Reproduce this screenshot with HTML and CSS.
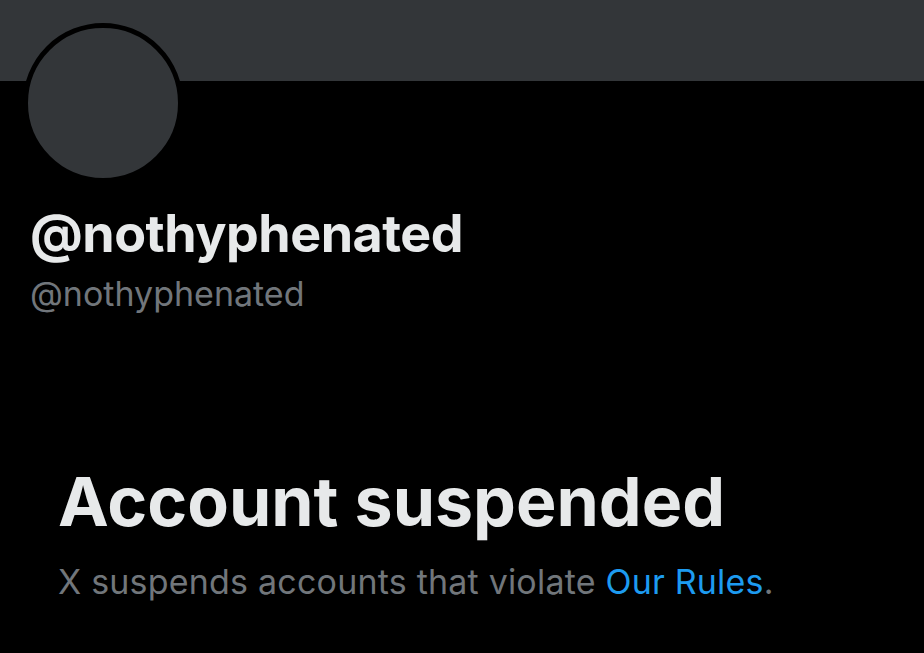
FILE: index.html
```html
<!DOCTYPE html>
<html lang="en">
<head>
  <meta charset="UTF-8">
  <meta name="viewport" content="width=device-width, initial-scale=1.0">
  <title>@nothyphenated / X</title>
  <link rel="stylesheet" href="styles.css">
</head>
<body>
  <div class="banner"></div>

  <div class="profile">
    <div class="avatar"></div>
    <h1 class="display-name">@nothyphenated</h1>
    <div class="handle">@nothyphenated</div>
  </div>

  <div class="suspended">
    <h2>Account suspended</h2>
    <p>X suspends accounts that violate <a href="#">Our Rules</a>.</p>
  </div>
</body>
</html>
```

FILE: styles.css
```css
body {
  margin: 0;
  background: #000000;
  font-family: 'Inter', 'Liberation Sans', sans-serif;
  color: #e7e9ea;
  overflow: hidden;
}

.banner {
  height: 81px;
  background: #333639;
}

.profile {
  padding: 0 0 0 23px;
}

.avatar {
  width: 150px;
  height: 150px;
  margin-top: -58px;
  background: #333639;
  border: 5px solid #000000;
  border-radius: 50%;
}

.display-name {
  margin: 22px 0 0 7px;
  font-size: 52px;
  font-weight: 700;
  line-height: 58px;
  letter-spacing: -0.5px;
}

.handle {
  margin: 10px 0 0 7px;
  font-size: 34px;
  line-height: 42px;
  color: #71767b;
}

.suspended {
  padding: 146px 0 0 58px;
}

.suspended h2 {
  margin: 0;
  font-size: 68px;
  font-weight: 700;
  line-height: 80px;
}

.suspended p {
  margin: 20px 0 0;
  font-size: 34px;
  line-height: 42px;
  letter-spacing: 0.2px;
  color: #71767b;
}

.suspended a {
  color: #1d9bf0;
  text-decoration: none;
}
```
